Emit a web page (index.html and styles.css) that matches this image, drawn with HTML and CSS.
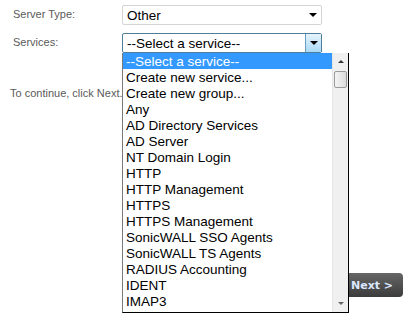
FILE: index.html
```html
<!DOCTYPE html>
<html lang="en">
<head>
    <meta charset="UTF-8">
    <title>Server Setup</title>
    <link rel="stylesheet" href="styles.css">
</head>
<body>
    <div class="wizard">
        <div class="field-row">
            <span class="field-label">Server Type:</span>
            <div class="select-box">
                <span class="select-text">Other</span>
                <span class="select-arrow"><span class="tri down"></span></span>
            </div>
        </div>

        <div class="field-row services-row">
            <span class="field-label">Services:</span>
            <div class="select-wrap">
                <div class="select-box open">
                    <span class="select-text">--Select a service--</span>
                    <span class="select-arrow"><span class="tri down"></span></span>
                </div>

                <!-- open dropdown list sits over the page -->
                <div class="dropdown">
                    <ul class="option-list">
                        <li class="selected">--Select a service--</li>
                        <li>Create new service...</li>
                        <li>Create new group...</li>
                        <li>Any</li>
                        <li>AD Directory Services</li>
                        <li>AD Server</li>
                        <li>NT Domain Login</li>
                        <li>HTTP</li>
                        <li>HTTP Management</li>
                        <li>HTTPS</li>
                        <li>HTTPS Management</li>
                        <li>SonicWALL SSO Agents</li>
                        <li>SonicWALL TS Agents</li>
                        <li>RADIUS Accounting</li>
                        <li>IDENT</li>
                        <li>IMAP3</li>
                    </ul>
                    <div class="scrollbar">
                        <span class="scroll-btn"><span class="tri up small"></span></span>
                        <span class="scroll-thumb"></span>
                        <span class="scroll-track"></span>
                        <span class="scroll-btn"><span class="tri down small"></span></span>
                    </div>
                </div>
            </div>
        </div>

        <p class="hint">To continue, click Next.</p>

        <div class="button-bar">
            <button class="next-btn">Next &gt;</button>
        </div>
    </div>
</body>
</html>
```

FILE: styles.css
```css
* {
    box-sizing: border-box;
}

body {
    margin: 0;
    background-color: #fff;
    font-family: 'Liberation Sans', Tahoma, sans-serif;
    color: #555;
}

.wizard {
    padding: 5px 0 0 0;
    height: 319px;
    display: flex;
    flex-direction: column;
}

.field-row {
    display: flex;
    align-items: center;
    height: 20px;
}

.services-row {
    margin-top: 8px;
}

.field-label {
    width: 122px;
    padding-left: 13px;
    padding-bottom: 2px;
    font-size: 11px;
    color: #5a5a5a;
}

.select-wrap {
    position: relative;
}

.select-box {
    width: 200px;
    height: 20px;
    border: 1px solid #d4d4d4;
    border-radius: 2px;
    display: flex;
    align-items: center;
    background: #fff;
    font-family: 'Liberation Sans', Arial, sans-serif;
    font-size: 13.5px;
    color: #000;
}

.select-box.open {
    border-color: #4f7e9b;
}

.select-text {
    flex: 1;
    padding-left: 4px;
}

.select-arrow {
    width: 16px;
    height: 18px;
    display: flex;
    align-items: center;
    justify-content: center;
}

.select-box.open .select-arrow {
    border-left: 1px solid #6a9cbe;
    background: linear-gradient(#e6f4fc, #a9d9f5);
}

.tri {
    width: 0;
    height: 0;
    border-left: 4px solid transparent;
    border-right: 4px solid transparent;
}

.tri.down {
    border-top: 4px solid #000;
}

.tri.up {
    border-bottom: 4px solid #000;
}

.tri.small {
    border-left-width: 3px;
    border-right-width: 3px;
}

.tri.small.down {
    border-top: 3px solid #666;
}

.tri.small.up {
    border-bottom: 3px solid #333;
}

.dropdown {
    position: absolute;
    top: 20px;
    left: 0;
    width: 227px;
    height: 260px;
    display: flex;
    background: #fff;
    border: 1px solid #000;
    border-left-color: #7a7a7a;
    border-top: none;
    z-index: 2;
}

.option-list {
    flex: 1;
    margin: 0;
    padding: 0;
    list-style: none;
    font-family: 'Liberation Sans', Arial, sans-serif;
    font-size: 13.5px;
    color: #000;
}

.option-list li {
    height: 16px;
    line-height: 16px;
    padding: 1px 0 0 3px;
    white-space: nowrap;
}

.option-list li.selected {
    background-color: #3399ff;
    color: #fff;
}

.scrollbar {
    width: 16px;
    display: flex;
    flex-direction: column;
    background: #f0f0f0;
    border-left: 1px solid #e6e6e6;
}

.scroll-btn {
    height: 17px;
    display: flex;
    align-items: center;
    justify-content: center;
}

.scroll-thumb {
    height: 17px;
    margin: 1px 1px 0;
    border: 1px solid #9a9a9a;
    border-radius: 2px;
    background: linear-gradient(90deg, #f4f4f4, #dcdcdc);
}

.scroll-track {
    flex: 1;
}

.hint {
    margin: 34px 0 0 10px;
    font-size: 11px;
    color: #5a5a5a;
}

.button-bar {
    margin-top: auto;
    margin-bottom: 22px;
    display: flex;
    justify-content: flex-end;
    padding-right: 4px;
}

.next-btn {
    width: 72px;
    height: 24px;
    border: none;
    border-radius: 4px;
    padding: 0 0 0 20px;
    text-align: left;
    background: linear-gradient(#666, #3c3c3c);
    color: #dbe8ff;
    font-family: 'DejaVu Sans', Tahoma, sans-serif;
    font-weight: bold;
    font-size: 11px;
}
```
